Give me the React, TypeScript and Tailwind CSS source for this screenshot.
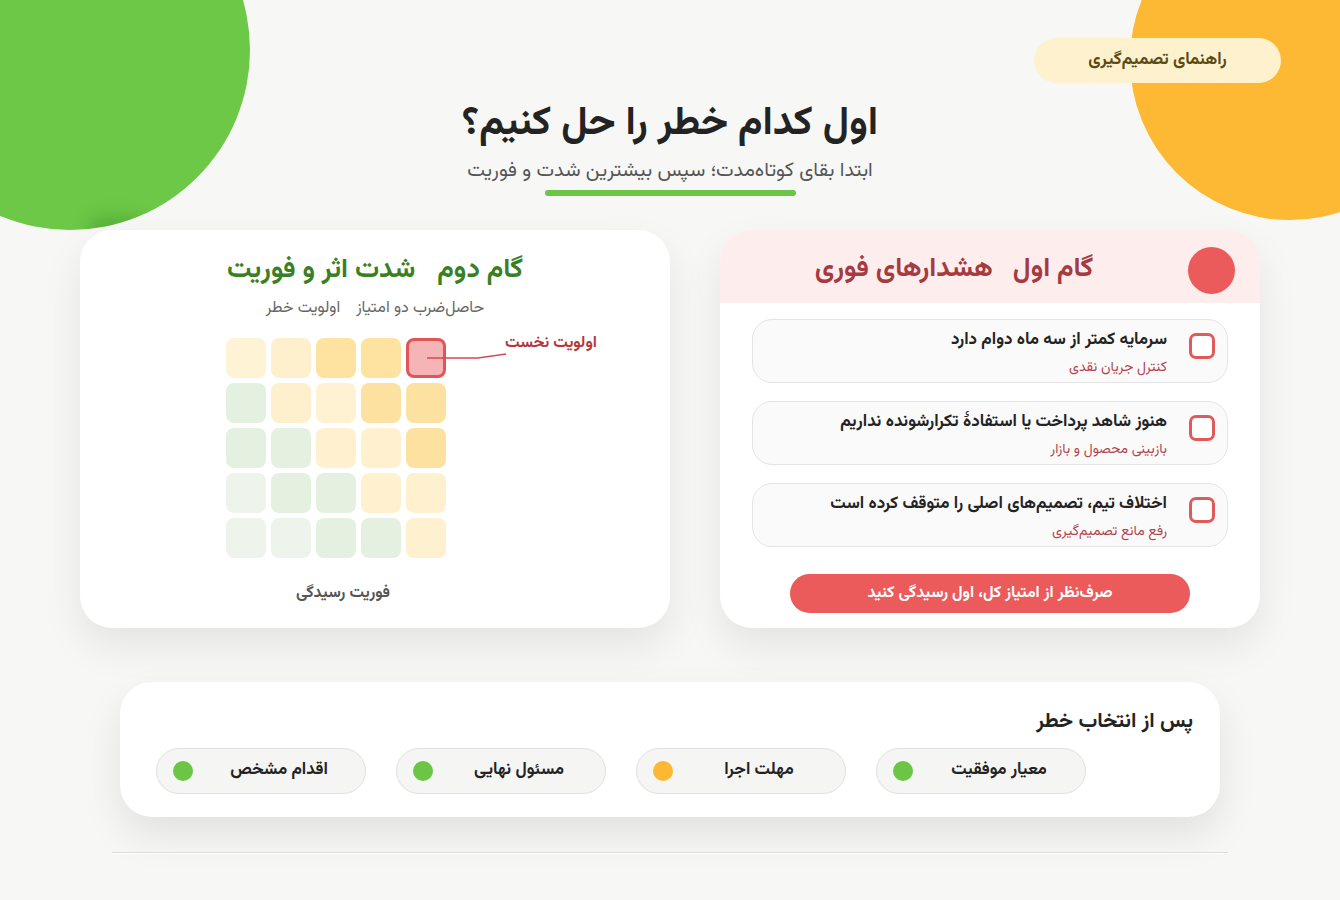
import React from 'react';

const font = { fontFamily: '"Vazirmatn", "Noto Sans Arabic", "DejaVu Sans", sans-serif' };

// 5x5 matrix, left to right, top to bottom
const matrix = [
    ['bg-[#fff3d6]', 'bg-[#fff0cd]', 'bg-[#fde2a0]', 'bg-[#fde2a0]', 'hot'],
    ['bg-[#e4f1e0]', 'bg-[#fff0cd]', 'bg-[#fff2d3]', 'bg-[#fde1a0]', 'bg-[#fde1a0]'],
    ['bg-[#e4f1e0]', 'bg-[#e4f1e0]', 'bg-[#fff1d0]', 'bg-[#fff1d0]', 'bg-[#fde1a0]'],
    ['bg-[#eef3ec]', 'bg-[#e4f1e0]', 'bg-[#e4f1e0]', 'bg-[#fff1d0]', 'bg-[#fff1d0]'],
    ['bg-[#eef3ec]', 'bg-[#eef3ec]', 'bg-[#e4f1e0]', 'bg-[#e4f1e0]', 'bg-[#fff1d0]'],
];

const alerts = [
    { title: 'سرمایه کمتر از سه ماه دوام دارد', note: 'کنترل جریان نقدی' },
    { title: 'هنوز شاهد پرداخت یا استفادهٔ تکرارشونده نداریم', note: 'بازبینی محصول و بازار' },
    { title: 'اختلاف تیم، تصمیم‌های اصلی را متوقف کرده است', note: 'رفع مانع تصمیم‌گیری' },
];

const steps = [
    { label: 'معیار موفقیت', dot: 'bg-[#6cc646]' },
    { label: 'مهلت اجرا', dot: 'bg-[#fdb833]' },
    { label: 'مسئول نهایی', dot: 'bg-[#6cc646]' },
    { label: 'اقدام مشخص', dot: 'bg-[#6cc646]' },
];

export default function App() {
    return (
        <div dir="rtl" style={font} className="relative min-h-[900px] w-full overflow-hidden bg-[#f7f7f5] text-[#232323]">
            {/* decorative blobs */}
            <div className="absolute -left-[110px] -top-[130px] h-[360px] w-[360px] overflow-hidden rounded-full bg-[#6cc846]">
                <div className="absolute bottom-[-16px] left-[198px] h-[30px] w-[60px] rounded-full bg-[#3f8f2a]/40 blur-[8px]" />
            </div>
            <div className="absolute left-[1130px] -top-[100px] h-[320px] w-[320px] rounded-full bg-[#feb934]" />

            <div className="relative flex flex-col">
                <div className="flex pt-[38px] pr-[59px]">
                    <span className="flex h-[45px] w-[247px] items-center justify-center rounded-full bg-[#fdf2cd] text-[17px] font-bold text-[#5a4a14]">
                        راهنمای تصمیم‌گیری
                    </span>
                </div>

                <h1 className="mt-[16px] text-center text-[40px] font-bold leading-[50px] text-[#232323]">اول کدام خطر را حل کنیم؟</h1>
                <p className="mt-[9px] text-center text-[20px] leading-[26px] text-[#555]">ابتدا بقای کوتاه‌مدت؛ سپس بیشترین شدت و فوریت</p>
                <div className="mx-auto mt-[6px] h-[6px] w-[251px] rounded-full bg-[#6cc646]" />

                {/* two steps */}
                <div className="mt-[34px] flex gap-[50px] px-[80px]">
                    {/* step one */}
                    <section className="flex h-[398px] w-[540px] flex-col overflow-hidden rounded-[32px] bg-white shadow-[0_18px_40px_rgba(0,0,0,0.08)]">
                        <div className="flex h-[73px] items-start bg-[#fdeded] pr-[25px] pt-[17px]">
                            <span className="h-[47px] w-[47px] shrink-0 rounded-full bg-[#eb5b5b]" />
                            <h2 className="flex flex-1 justify-center gap-[20px] pt-[6px] text-[27px] font-bold leading-[34px] text-[#a63a3f]">
                                <span>گام اول</span>
                                <span>هشدارهای فوری</span>
                            </h2>
                        </div>

                        <div className="mt-4 flex flex-col gap-[18px] px-8">
                            {alerts.map((a) => (
                                <div key={a.title} className="flex h-16 items-start gap-[22px] rounded-[20px] border border-[#e4e4e4] bg-[#fafafa] pr-3 pt-[9px]">
                                    <span className="mt-[4px] h-[26px] w-[26px] shrink-0 rounded-[7px] border-[3px] border-[#e05a5a] bg-white" />
                                    <div className="flex flex-col gap-[7px]">
                                        <span className="text-[17px] font-bold leading-[22px] text-[#232323]">{a.title}</span>
                                        <span className="text-[14px] leading-[20px] text-[#b2444d]">{a.note}</span>
                                    </div>
                                </div>
                            ))}
                        </div>

                        <button className="mx-auto mt-[27px] h-[39px] w-[400px] rounded-full bg-[#eb5b5b] text-[16px] font-bold text-white">
                            صرف‌نظر از امتیاز کل، اول رسیدگی کنید
                        </button>
                    </section>

                    {/* step two */}
                    <section className="flex h-[398px] w-[590px] flex-col items-center rounded-[32px] bg-white pt-[25px] shadow-[0_18px_40px_rgba(0,0,0,0.08)]">
                        <h2 className="flex gap-[22px] text-[27px] font-bold leading-[32px] text-[#3b7f25]">
                            <span>گام دوم</span>
                            <span>شدت اثر و فوریت</span>
                        </h2>
                        <p className="mt-3 flex gap-4 text-[16px] leading-[20px] text-[#666]">
                            <span>حاصل‌ضرب دو امتیاز</span>
                            <span>اولویت خطر</span>
                        </p>

                        <div className="mt-[19px] flex w-full flex-col items-end pl-[146px]">
                            <div className="relative w-[234px]">
                                <div dir="ltr" className="grid grid-cols-[repeat(5,40px)] gap-[5px]">
                                    {matrix.flat().map((c, i) =>
                                        c === 'hot' ? (
                                            <div key={i} className="h-10 w-10 rounded-[8px] border-[3px] border-[#e25556] bg-[#f5b5b6]" />
                                        ) : (
                                            <div key={i} className={`h-10 w-10 rounded-[8px] ${c}`} />
                                        )
                                    )}
                                </div>
                                <svg className="absolute left-[200px] top-[14px]" width="82" height="10" viewBox="0 0 82 10">
                                    <polyline points="1,6 52,6 80,2" fill="none" stroke="#d64a50" strokeWidth="1.5" />
                                </svg>
                                <span className="absolute left-[279px] top-[-4px] whitespace-nowrap text-[16px] font-bold leading-[20px] text-[#b2383f]">
                                    اولویت نخست
                                </span>
                            </div>
                            <p className="mt-[25px] w-[234px] text-center text-[16px] font-bold leading-[22px] text-[#555]">فوریت رسیدگی</p>
                        </div>
                    </section>
                </div>

                {/* after choosing */}
                <section className="mx-[120px] mt-[54px] rounded-[32px] bg-white pb-[23px] pt-[27px] shadow-[0_18px_40px_rgba(0,0,0,0.09)]">
                    <h3 className="pr-[27px] text-[21px] font-bold leading-[26px] text-[#232323]">پس از انتخاب خطر</h3>
                    <div className="mt-[13px] flex gap-[30px] pr-[134px]">
                        {steps.map((s) => (
                            <div key={s.label} className="flex h-[46px] w-[210px] items-center rounded-full border border-[#e0e0e0] bg-[#f5f5f3] pl-4">
                                <span className="flex-1 text-center text-[17px] font-bold text-[#232323]">{s.label}</span>
                                <span className={`h-5 w-5 rounded-full ${s.dot}`} />
                            </div>
                        ))}
                    </div>
                </section>

                <div className="mx-[112px] mt-[35px] h-px bg-[#dcdcdc] shadow-[0_1px_0_#fff]" />
            </div>
        </div>
    );
}
